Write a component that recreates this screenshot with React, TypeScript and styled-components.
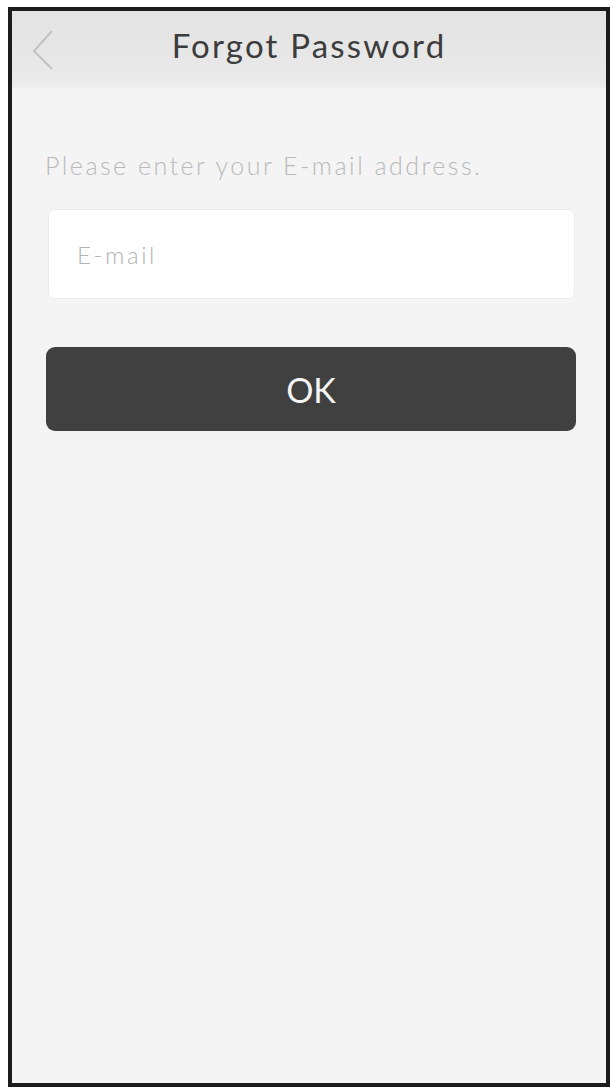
import React from "react";
import styled, { createGlobalStyle } from "styled-components";

const GlobalStyle = createGlobalStyle`
  html, body {
    margin: 0;
    padding: 0;
    background: #ffffff;
  }
  body {
    font-family: "Lato", "Liberation Sans", sans-serif;
  }
`;

const Page = styled.div`
  width: 612px;
  height: 1087px;
  padding: 7px 2px 0 8px;
  box-sizing: border-box;
`;

const Phone = styled.div`
  width: 602px;
  height: 1080px;
  box-sizing: border-box;
  border: 4px solid #1c1c1c;
  background: #f4f4f4;
  display: flex;
  flex-direction: column;
`;

const Header = styled.header`
  height: 77px;
  display: grid;
  grid-template-columns: 60px 1fr 60px;
  align-items: center;
  background: linear-gradient(#e3e3e3, #e9e9e9 85%, #eeeeee);
`;

const BackButton = styled.button`
  border: none;
  background: none;
  padding: 0 0 0 18px;
  height: 100%;
  display: flex;
  align-items: center;
`;

const Title = styled.h1`
  margin: 0;
  text-align: center;
  font-weight: 400;
  font-size: 33px;
  color: #3c3c3c;
  letter-spacing: 2.2px;
  padding-bottom: 10px;
`;

const Body = styled.main`
  padding: 62px 30px 0 32px;
  display: flex;
  flex-direction: column;
`;

const Hint = styled.p`
  margin: 0 0 0 1px;
  font-size: 25px;
  font-weight: 300;
  color: #bababa;
  letter-spacing: 2.5px;
`;

const Input = styled.input`
  margin: 29px 1px 0 4px;
  height: 90px;
  box-sizing: border-box;
  border: 1px solid #ececec;
  border-radius: 7px;
  background: #ffffff;
  padding: 0 28px;
  font-family: inherit;
  font-size: 24px;
  font-weight: 300;
  letter-spacing: 2.6px;
  color: #555;
  outline: none;
  &::placeholder {
    color: #b3b3b3;
  }
`;

const OkButton = styled.button`
  margin: 48px 0 0 2px;
  height: 84px;
  border: none;
  border-radius: 9px;
  background: #404040;
  color: #f4f4f4;
  font-family: inherit;
  font-size: 34px;
  font-weight: 400;
`;

export default function App() {
  return (
    <>
      <GlobalStyle />
      <Page>
        <Phone>
          <Header>
            <BackButton aria-label="Back">
              <svg width="26" height="44" viewBox="0 0 26 44">
                <polyline
                  points="22,3 4,23 22,41"
                  fill="none"
                  stroke="#c2c2c2"
                  strokeWidth="2"
                />
              </svg>
            </BackButton>
            <Title>Forgot Password</Title>
            <span />
          </Header>
          <Body>
            <Hint>Please enter your E-mail address.</Hint>
            <Input placeholder="E-mail" />
            <OkButton>OK</OkButton>
          </Body>
        </Phone>
      </Page>
    </>
  );
}
